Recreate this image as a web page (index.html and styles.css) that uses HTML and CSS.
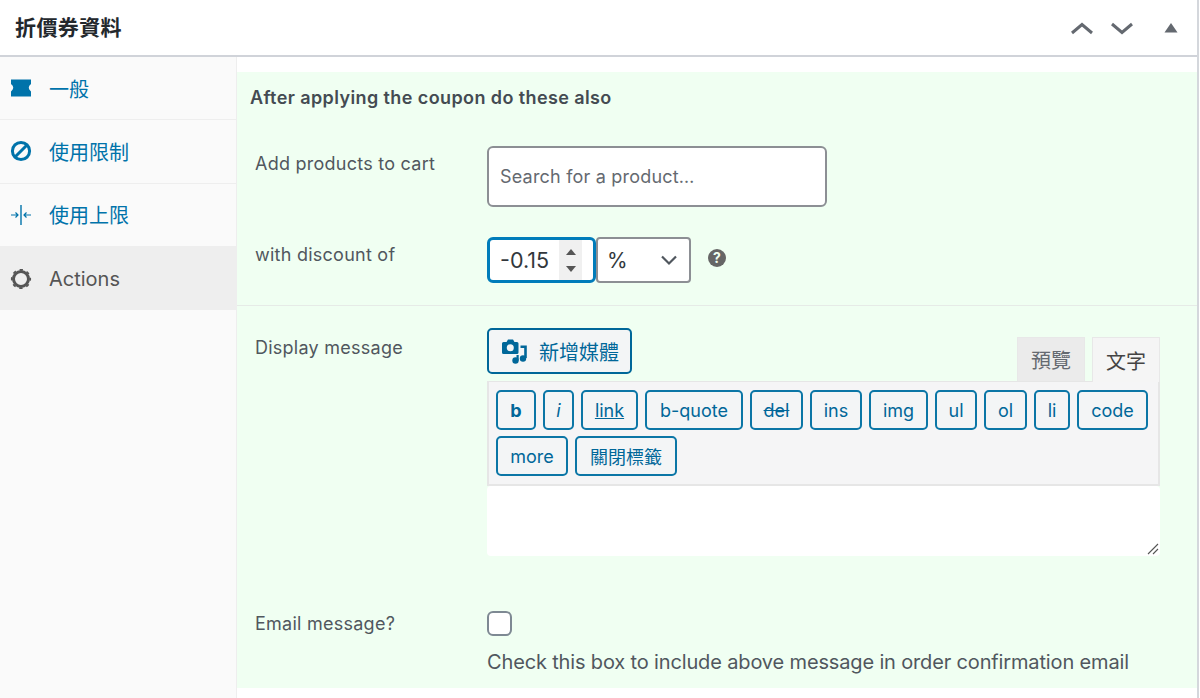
FILE: index.html
```html
<!DOCTYPE html>
<html lang="zh-Hant">
<head>
<meta charset="utf-8">
<title>折價券資料</title>
<link rel="stylesheet" href="styles.css">
</head>
<body>
<div class="box">
  <header class="box-head">
    <h2>折價券資料</h2>
    <div class="head-actions">
      <svg class="chev" width="22" height="14" viewBox="0 0 22 14"><path d="M1 12 L11 3.500 L21 12" fill="none" stroke="#646970" stroke-width="3"/></svg>
      <svg class="chev" width="22" height="14" viewBox="0 0 22 14"><path d="M1 3 L11 11.500 L21 3" fill="none" stroke="#646970" stroke-width="3"/></svg>
      <svg class="tri" width="14" height="10" viewBox="0 0 14 10"><path d="M7 0 L13.500 9.500 H0.500 Z" fill="#646970"/></svg>
    </div>
  </header>
  <div class="box-body">
    <nav class="side">
      <a class="side-item">
        <svg width="22" height="18" viewBox="0 0 22 18"><path d="M1 0.500 H21 V5 Q16.500 8.500 21 12.500 V17.500 H1 V12.500 Q5.500 8.500 1 5 Z" fill="#0073aa"/></svg>
        <span>一般</span>
      </a>
      <a class="side-item">
        <svg width="22" height="22" viewBox="0 0 22 22"><circle cx="11" cy="11" r="8.600" fill="none" stroke="#0073aa" stroke-width="3"/><path d="M5 17 L17 5" stroke="#0073aa" stroke-width="3"/></svg>
        <span>使用限制</span>
      </a>
      <a class="side-item">
        <svg width="22" height="22" viewBox="0 0 22 22"><path d="M11 1 V21" stroke="#0073aa" stroke-width="1.400"/><path d="M1 11 H8 M5.500 8.500 L8 11 L5.500 13.500 M21 11 H14 M16.500 8.500 L14 11 L16.500 13.500" fill="none" stroke="#0073aa" stroke-width="1.200"/></svg>
        <span>使用上限</span>
      </a>
      <a class="side-item active">
        <svg width="22" height="22" viewBox="0 0 22 22"><circle cx="11" cy="11" r="7.500" fill="none" stroke="#555" stroke-width="3"/><circle cx="11" cy="11" r="9.300" fill="none" stroke="#555" stroke-width="1.600" stroke-dasharray="3.300 4" stroke-dashoffset="1.650"/></svg>
        <span>Actions</span>
      </a>
    </nav>
    <main class="panel">
      <section class="group first">
        <h3>After applying the coupon do these also</h3>
        <div class="row row-product">
          <label>Add products to cart</label>
          <input class="search" type="text" placeholder="Search for a product…">
        </div>
        <div class="row row-discount">
          <label>with discount of</label>
          <div class="discount">
            <div class="number">
              <span>-0.15</span>
              <span class="spin">
                <svg width="12" height="8" viewBox="0 0 12 8"><path d="M6 1 L11 7 H1 Z" fill="#555"/></svg>
                <svg width="12" height="8" viewBox="0 0 12 8"><path d="M1 1 H11 L6 7 Z" fill="#555"/></svg>
              </span>
            </div>
            <div class="select">
              <span>%</span>
              <svg width="18" height="12" viewBox="0 0 18 12"><path d="M2 2.500 L9 9.500 L16 2.500" fill="none" stroke="#50575e" stroke-width="2.200"/></svg>
            </div>
            <svg class="help" width="20" height="20" viewBox="0 0 20 20"><circle cx="10" cy="10" r="9" fill="#666"/><text x="10" y="14.500" text-anchor="middle" class="help-q">?</text></svg>
          </div>
        </div>
      </section>
      <section class="group second">
        <div class="row row-message">
          <label>Display message</label>
          <div class="editor">
            <div class="editor-top">
              <button class="media">
                <svg width="28" height="28" viewBox="0 0 28 28"><path d="M2.500 5 H5.500 L7 2.500 H12 L13.500 5 H16 A1.500 1.500 0 0 1 17.500 6.500 V15.500 A1.500 1.500 0 0 1 16 17 H2.500 A1.500 1.500 0 0 1 1 15.500 V6.500 A1.500 1.500 0 0 1 2.500 5 Z" fill="#006799"/><circle cx="9.300" cy="10.700" r="3.500" fill="#f3f5f6"/><path d="M19.500 9.700 H24.500 V21" fill="none" stroke="#006799" stroke-width="2.600"/><circle cx="22" cy="21.500" r="3.200" fill="#006799"/><circle cx="14.500" cy="23.500" r="3.200" fill="#006799"/><path d="M16.600 23.500 V18" fill="none" stroke="#006799" stroke-width="2.200"/></svg>
                <span>新增媒體</span>
              </button>
              <div class="tabs">
                <span class="tab">預覽</span>
                <span class="tab current">文字</span>
              </div>
            </div>
            <div class="toolbar">
              <button class="q q-b"><b>b</b></button>
              <button class="q q-i"><i>i</i></button>
              <button class="q q-link"><u>link</u></button>
              <button class="q q-quote">b-quote</button>
              <button class="q q-del"><s>del</s></button>
              <button class="q q-ins">ins</button>
              <button class="q q-img">img</button>
              <button class="q q-ul">ul</button>
              <button class="q q-ol">ol</button>
              <button class="q q-li">li</button>
              <button class="q q-code">code</button>
              <button class="q q-more">more</button>
              <button class="q q-close">關閉標籤</button>
            </div>
            <div class="textarea">
              <svg class="grip" width="12" height="12" viewBox="0 0 12 12"><path d="M1 11 L11 1 M6 11 L11 6" stroke="#555" stroke-width="1.100"/></svg>
            </div>
          </div>
        </div>
        <div class="row row-email">
          <label>Email message?</label>
          <div class="email">
            <span class="check"></span>
            <p>Check this box to include above message in order confirmation email</p>
          </div>
        </div>
      </section>
    </main>
  </div>
</div>
</body>
</html>
```
FILE: styles.css
```css
* { box-sizing: border-box; }
html, body { margin: 0; padding: 0; height: 698px; overflow: hidden; background: #fff; }
body { font-family: Inter, "Noto Sans CJK TC", sans-serif; color: #50575e; font-size: 18px; }
.box { height: 698px; width: 1199px; border-right: 2px solid #d4d7dc; display: flex; flex-direction: column; }
.box-head { height: 57px; flex: none; border-bottom: 2px solid #d0d3d9; display: flex; align-items: center; justify-content: space-between; padding: 0 19px 0 15px; }
.box-head h2 { margin: 0; font-size: 21px; letter-spacing: .4px; font-weight: 600; color: #23282d; line-height: 1; }
.head-actions { display: flex; align-items: center; gap: 18px; }
.tri { margin-left: 13px; }
.chev { display: block; }
.box-body { flex: 1; display: flex; min-height: 0; }
.side { width: 237px; flex: none; background: #fafafa; border-right: 1px solid #eee; }
.side-item { height: 63.300px; display: flex; align-items: center; gap: 17px; padding-left: 10px; border-bottom: 1px solid #eee; color: #0073aa; font-size: 20px; }
.side-item.active { background: #eee; color: #555; border-bottom: 0; }
.panel { margin: 15px 0 10px; flex: 1; background: #f0fff2; }
.group.first { height: 234px; border-bottom: 1px solid #e6ebe7; padding-top: 15px; }
h3 { margin: 0 0 37px 13px; font-size: 18px; letter-spacing: .4px; line-height: 22px; font-weight: 600; color: #444b52; }
.row { display: flex; padding-left: 18px; }
.row label { width: 232px; flex: none; font-size: 18px; line-height: 24px; letter-spacing: .25px; }
.row-product { height: 91px; }
.row-product label { padding-top: 6px; }
.search { width: 340px; height: 61px; border: 2px solid #8c8f94; border-radius: 6px; background: #fff; padding: 0 11px; font: 18px Inter, sans-serif; letter-spacing: .2px; outline: 0; }
.search::placeholder { color: #646970; opacity: 1; }
.row-discount label { padding-top: 6px; }
.discount { display: flex; align-items: center; height: 46px; }
.number { width: 109px; height: 46px; border: 3px solid #007cba; border-radius: 6px; background: #fff; display: flex; align-items: center; justify-content: space-between; padding: 0 11px 0 10px; font-size: 21.500px; color: #32373c; }
.spin { width: 23px; height: 40px; background: #f0f0f0; display: flex; flex-direction: column; align-items: center; justify-content: center; gap: 9px; }
.select { width: 95px; height: 46px; border: 2px solid #8c8f94; border-radius: 4px; background: #fff; display: flex; align-items: center; justify-content: space-between; padding: 0 11px 0 9px; font-size: 21px; color: #32373c; }
.help { margin-left: 16px; margin-top: -5px; }
.help-q { font: 700 14px Inter, sans-serif; fill: #f0fff2; }
.group.second { padding-top: 22px; }
.row-message { height: 263px; }
.row-message label { padding-top: 8px; }
.editor { width: 673px; }
.editor-top { display: flex; justify-content: space-between; align-items: flex-end; height: 53px; }
.media { height: 46px; width: 145px; margin-bottom: 7px; padding: 0 0 0 12px; border: 2px solid #006799; border-radius: 5px; background: #f3f5f6; color: #006799; font: 20px Inter, "Noto Sans CJK TC", sans-serif; display: flex; align-items: center; gap: 10px; }
.tabs { display: flex; gap: 7px; height: 44px; }
.tab { width: 68px; height: 44px; display: flex; align-items: center; justify-content: center; background: #ebebeb; border: 1px solid #e8e8e8; border-bottom: 0; font-size: 20px; color: #646970; }
.tab.current { background: #f5f5f5; color: #444; margin-bottom: -1px; height: 45px; position: relative; }
.toolbar { height: 105px; background: #f5f5f6; border: 2px solid #e6e6e6; border-top-width: 1px; padding: 8px 8px 0 7px; display: flex; flex-wrap: wrap; align-content: flex-start; gap: 6px 7px; }
.q { height: 40px; padding: 0; border: 2px solid #0b76a6; border-radius: 5px; background: #f3f5f6; color: #006799; font: 18px Inter, "Noto Sans CJK TC", sans-serif; }
.q-b { width: 40px; } .q-i { width: 31px; } .q-link { width: 57px; } .q-quote { width: 98px; }
.q-del { width: 53px; } .q-ins { width: 52px; } .q-img { width: 59px; } .q-ul { width: 42px; }
.q-ol { width: 43px; } .q-li { width: 36px; } .q-code { width: 71px; } .q-more { width: 72px; } .q-close { width: 102px; }
.textarea { height: 70px; background: #fff; border-radius: 4px; position: relative; }
.grip { position: absolute; right: 1px; bottom: 1px; }
.row-email label { padding-top: 21px; }
.email { padding-top: 20px; }
.check { display: block; width: 25px; height: 25px; background: #fff; border: 2px solid #7e8993; border-radius: 6px; }
.email p { margin: 13px 0 0; font-size: 20px; line-height: 26px; letter-spacing: -.15px; color: #50575e; white-space: nowrap; }
```
